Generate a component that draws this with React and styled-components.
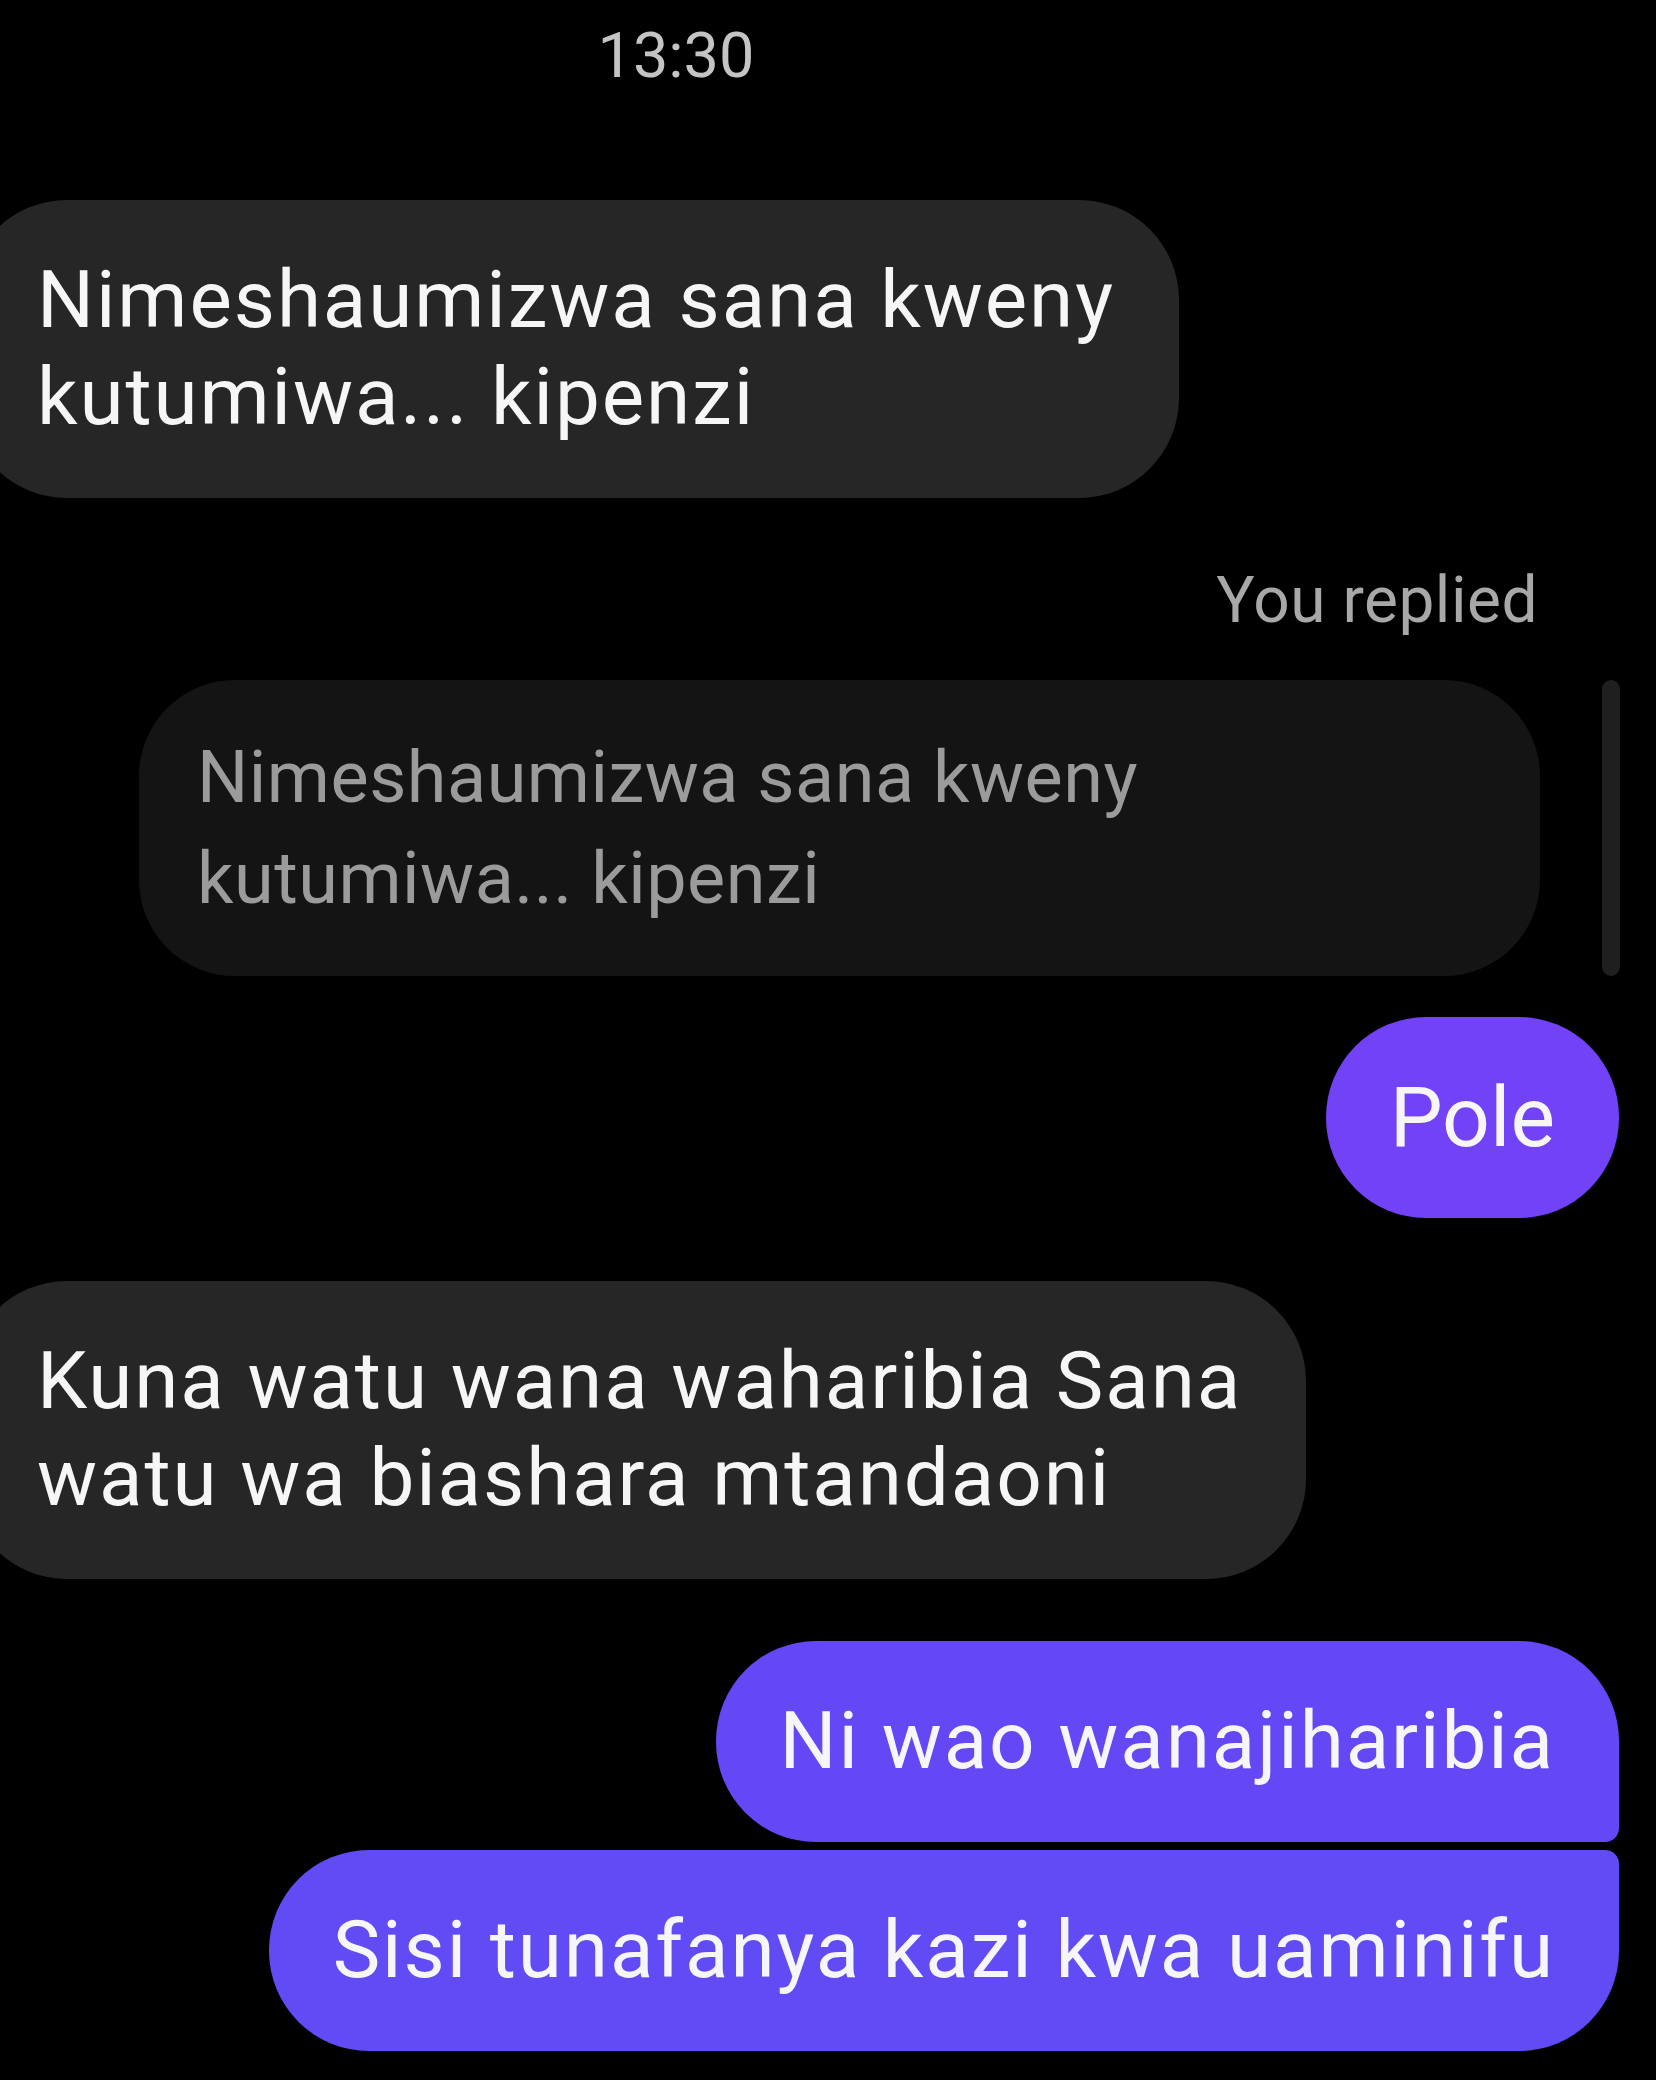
import React from "react";
import styled, { createGlobalStyle } from "styled-components";

const GlobalStyle = createGlobalStyle`
  html, body {
    margin: 0;
    padding: 0;
    background: #000;
  }
  body {
    font-family: Roboto, "Noto Sans", "Liberation Sans", sans-serif;
    -webkit-font-smoothing: antialiased;
  }
`;

const tones = {
  gray: "#262626",
  violet: "#7142f6",
  indigo: "#6447f5",
  blue: "#614bf4",
};

export default function App() {
  return (
    <>
      <GlobalStyle />
      <Thread>
        <TimeRow>13:30</TimeRow>

        <Bubble tone="gray" $incoming>
          Nimeshaumizwa sana kweny
          <br />
          kutumiwa... kipenzi
        </Bubble>

        <ReplyLabel>You replied</ReplyLabel>

        <ReplyRow>
          <Quoted>
            Nimeshaumizwa sana kweny
            <br />
            kutumiwa... kipenzi
          </Quoted>
          <QuoteBar />
        </ReplyRow>

        <Bubble tone="violet" $big $gap={41}>
          Pole
        </Bubble>

        <Bubble tone="gray" $incoming $gap={63}>
          Kuna watu wana waharibia Sana
          <br />
          watu wa biashara mtandaoni
        </Bubble>

        <Bubble tone="indigo" $gap={62} $corner="bottom">
          Ni wao wanajiharibia
        </Bubble>
        <Bubble tone="blue" $gap={8} $corner="top">
          Sisi tunafanya kazi kwa uaminifu
        </Bubble>
      </Thread>
    </>
  );
}

const Thread = styled.div`
  width: 1656px;
  height: 2080px;
  overflow: hidden;
  display: flex;
  flex-direction: column;
  background: #000;
`;

const TimeRow = styled.div`
  padding: 16px 304px 0 0;
  text-align: center;
  font-size: 63px;
  line-height: 80px;
  color: #c4c4c4;
`;

const Bubble = styled.div`
  align-self: ${(p) => (p.$incoming ? "flex-start" : "flex-end")};
  margin: ${(p) => (p.$incoming ? `${p.$gap || 104}px 0 0 -33px` : `${p.$gap}px 37px 0 0`)};
  padding: ${(p) => (p.$incoming ? "52px 64px 52px 70px" : "52px 64px")};
  background: ${(p) => tones[p.tone]};
  color: #f6f6f6;
  font-size: ${(p) => (p.$big ? "84px" : "80px")};
  letter-spacing: ${(p) => (p.$big ? "0" : "1.9px")};
  line-height: 97px;
  white-space: nowrap;
  border-radius: ${(p) =>
    p.$corner === "bottom"
      ? "100px 100px 14px 100px"
      : p.$corner === "top"
      ? "100px 14px 100px 100px"
      : "100px"};
`;

const ReplyLabel = styled.div`
  align-self: flex-end;
  margin: 63px 118px 0 0;
  font-size: 64px;
  letter-spacing: 0.5px;
  line-height: 80px;
  color: #a8a8a8;
`;

const ReplyRow = styled.div`
  display: flex;
  align-items: stretch;
  gap: 62px;
  margin: 39px 36px 0 139px;
`;

const Quoted = styled.div`
  flex: 1;
  padding: 47px 58px;
  background: #141414;
  color: #9b9b9b;
  font-size: 72px;
  letter-spacing: 0.5px;
  line-height: 101px;
  border-radius: 96px;
`;

const QuoteBar = styled.div`
  width: 18px;
  border-radius: 9px;
  background: #1f1f1f;
`;
